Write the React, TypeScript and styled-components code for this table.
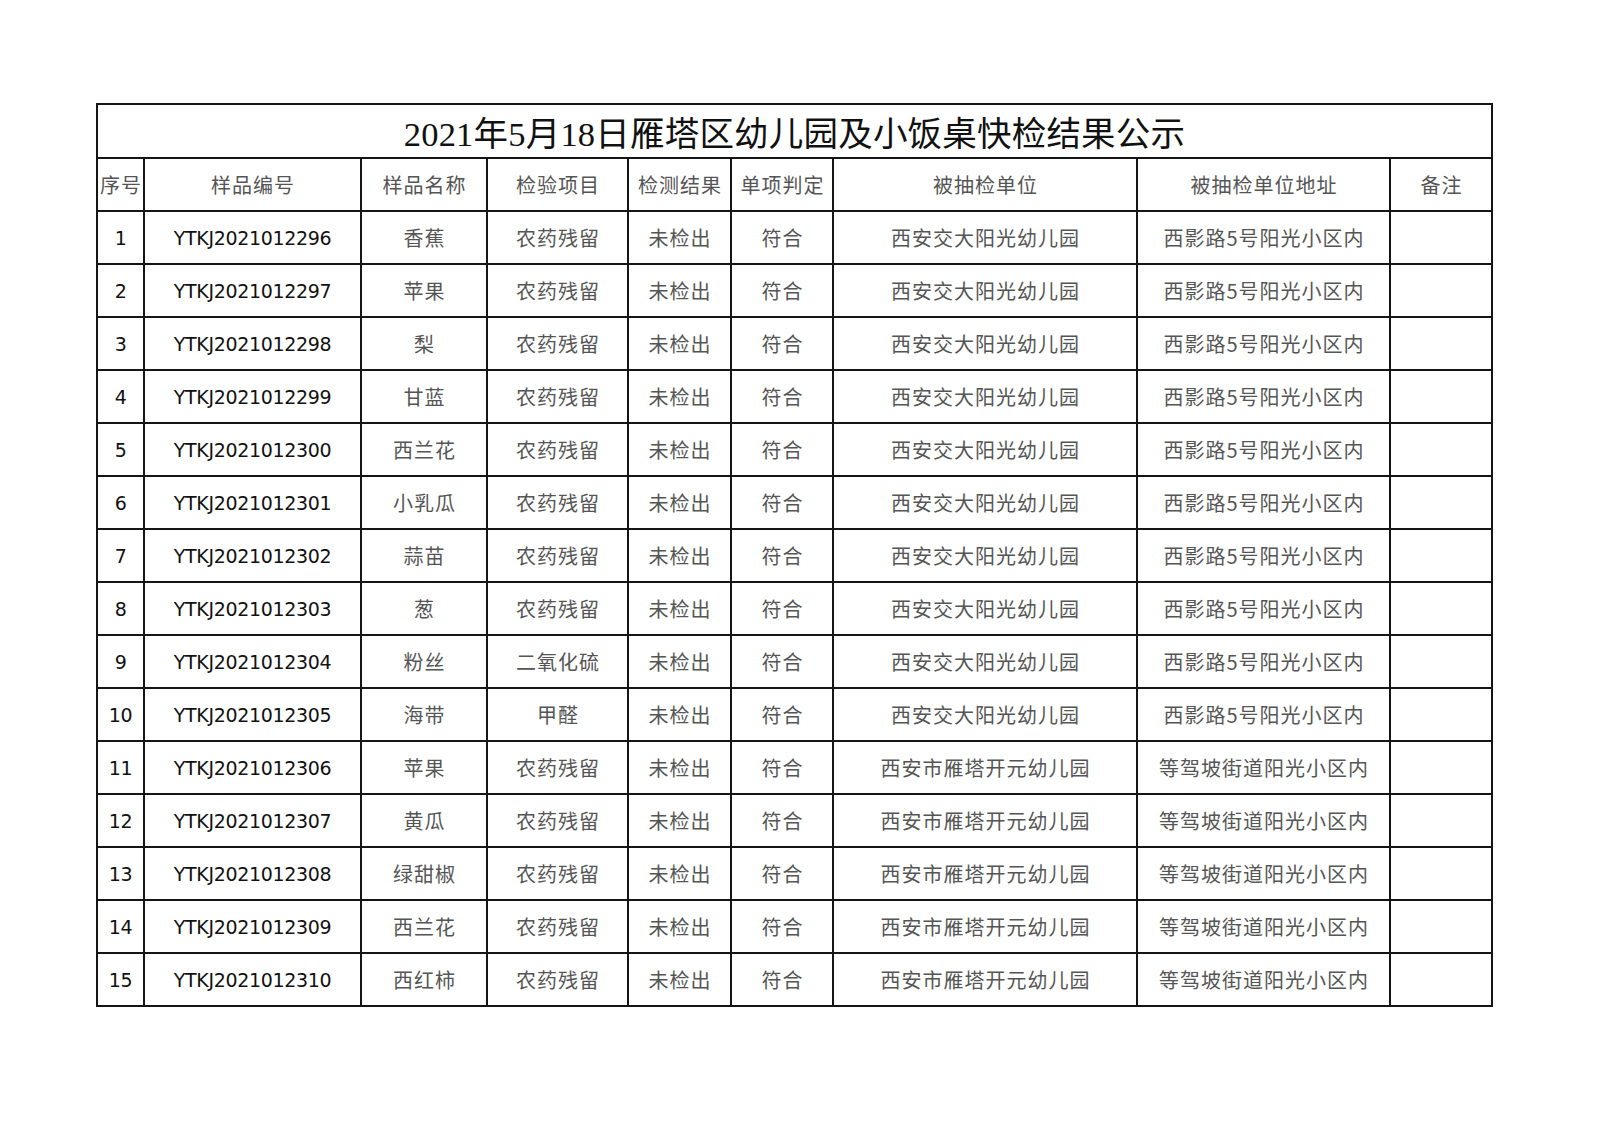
import styled, { createGlobalStyle } from "styled-components";

type RowType = {
  code: string;
  name: string;
  item: string;
  unit: string;
  address: string;
};

const HEADERS = [
  "序号",
  "样品编号",
  "样品名称",
  "检验项目",
  "检测结果",
  "单项判定",
  "被抽检单位",
  "被抽检单位地址",
  "备注",
];

const UNIT_A = "西安交大阳光幼儿园";
const ADDR_A = "西影路5号阳光小区内";
const UNIT_B = "西安市雁塔开元幼儿园";
const ADDR_B = "等驾坡街道阳光小区内";

const ROWS: RowType[] = [
  { code: "YTKJ2021012296", name: "香蕉", item: "农药残留", unit: UNIT_A, address: ADDR_A },
  { code: "YTKJ2021012297", name: "苹果", item: "农药残留", unit: UNIT_A, address: ADDR_A },
  { code: "YTKJ2021012298", name: "梨", item: "农药残留", unit: UNIT_A, address: ADDR_A },
  { code: "YTKJ2021012299", name: "甘蓝", item: "农药残留", unit: UNIT_A, address: ADDR_A },
  { code: "YTKJ2021012300", name: "西兰花", item: "农药残留", unit: UNIT_A, address: ADDR_A },
  { code: "YTKJ2021012301", name: "小乳瓜", item: "农药残留", unit: UNIT_A, address: ADDR_A },
  { code: "YTKJ2021012302", name: "蒜苗", item: "农药残留", unit: UNIT_A, address: ADDR_A },
  { code: "YTKJ2021012303", name: "葱", item: "农药残留", unit: UNIT_A, address: ADDR_A },
  { code: "YTKJ2021012304", name: "粉丝", item: "二氧化硫", unit: UNIT_A, address: ADDR_A },
  { code: "YTKJ2021012305", name: "海带", item: "甲醛", unit: UNIT_A, address: ADDR_A },
  { code: "YTKJ2021012306", name: "苹果", item: "农药残留", unit: UNIT_B, address: ADDR_B },
  { code: "YTKJ2021012307", name: "黄瓜", item: "农药残留", unit: UNIT_B, address: ADDR_B },
  { code: "YTKJ2021012308", name: "绿甜椒", item: "农药残留", unit: UNIT_B, address: ADDR_B },
  { code: "YTKJ2021012309", name: "西兰花", item: "农药残留", unit: UNIT_B, address: ADDR_B },
  { code: "YTKJ2021012310", name: "西红柿", item: "农药残留", unit: UNIT_B, address: ADDR_B },
];

const App = () => {
  return (
    <StPage>
      <GlobalStyle />
      <StSheet>
        <StTitle>2021年5月18日雁塔区幼儿园及小饭桌快检结果公示</StTitle>
        {HEADERS.map((h) => (
          <StCell key={h}>{h}</StCell>
        ))}
        {ROWS.map((row, idx) => (
          <StRow key={row.code}>
            <StCell latin>{idx + 1}</StCell>
            <StCell latin>{row.code}</StCell>
            <StCell>{row.name}</StCell>
            <StCell>{row.item}</StCell>
            <StCell>未检出</StCell>
            <StCell>符合</StCell>
            <StCell>{row.unit}</StCell>
            <StCell>{row.address}</StCell>
            <StCell></StCell>
          </StRow>
        ))}
      </StSheet>
    </StPage>
  );
};

export default App;

const GlobalStyle = createGlobalStyle`
  html, body {
    margin: 0;
    padding: 0;
    background: #ffffff;
  }
`;

const StPage = styled.div`
  width: 1600px;
  height: 1131px;
  padding: 103px 0 0 96px;
  box-sizing: border-box;
  background: #ffffff;
`;

const StSheet = styled.div`
  display: grid;
  grid-template-columns: 45px 215px 124px 139px 101px 100px 302px 251px 100px;
  grid-template-rows: 52px 51px;
  grid-auto-rows: 51px;
  gap: 2px;
  padding: 2px;
  width: max-content;
  background: #151515;
`;

const StRow = styled.div`
  display: contents;
`;

const StTitle = styled.div`
  grid-column: 1 / -1;
  display: flex;
  align-items: center;
  justify-content: center;
  background: #ffffff;
  color: #111111;
  font-family: "Liberation Serif", "Noto Sans CJK SC", serif;
  font-size: 34.5px;
  letter-spacing: 0.2px;
`;

const StCell = styled.div<{ latin?: boolean }>`
  display: flex;
  align-items: center;
  justify-content: center;
  background: #ffffff;
  white-space: nowrap;
  overflow: hidden;
  font-family: ${({ latin }) =>
    latin ? `"DejaVu Sans", sans-serif` : `"Noto Sans CJK SC", sans-serif`};
  font-size: ${({ latin }) => (latin ? "19px" : "20px")};
  letter-spacing: ${({ latin }) => (latin ? "-0.35px" : "1px")};
  text-indent: ${({ latin }) => (latin ? "0" : "1px")};
  color: ${({ latin }) => (latin ? "#111111" : "#555555")};
`;
